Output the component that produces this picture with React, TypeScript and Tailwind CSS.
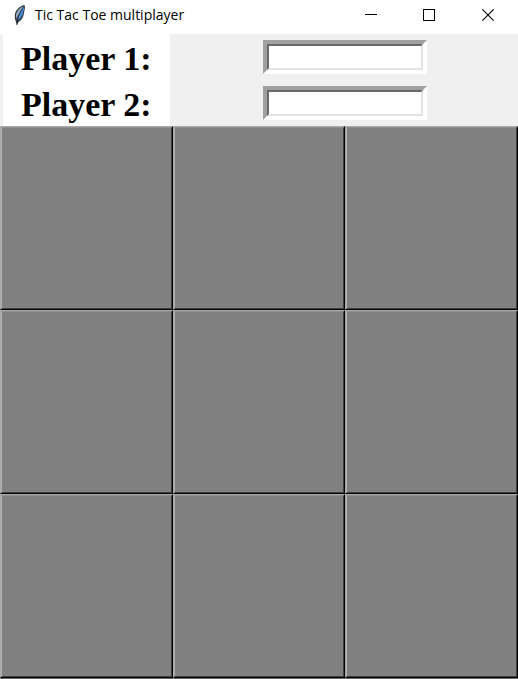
import { useState } from "react";

const players = [1, 2];
const cells = [0, 1, 2, 3, 4, 5, 6, 7, 8];

function Feather() {
  return (
    <svg width="15" height="22" viewBox="0 0 15 22" aria-hidden="true">
      <path d="M12.5 1C8.500 1.500 4.500 5 3 9.500C2.500 12 2.700 15 4 18L5 20L6.500 18C9.500 16.500 11.500 13 12 9C12.500 6 13.500 3 12.500 1Z" fill="#303a46" />
      <path d="M11.500 2C8 3.500 5 6.500 4 10.500L4 15C7 10 9 6 11.500 2Z" fill="#93a9c2" />
      <path d="M12 3C9 7 7 11 5.500 16.500C8.500 14.500 10.500 12 11 8.500C11.300 6.500 12.500 5 12 3Z" fill="#4a8ee0" />
      <path d="M9.500 6C7.500 9 6 13 5 20" fill="none" stroke="#222b36" strokeWidth="0.6" />
      <path d="M5 17V21" stroke="#222" strokeWidth="1" />
    </svg>
  );
}

function TitleBar() {
  return (
    <header className="flex h-[34px] items-start bg-white">
      <div className="flex h-[30px] grow items-center gap-2 pl-3">
        <Feather />
        <h1 className="font-['Open_Sans','Noto_Sans',sans-serif] text-sm text-black">Tic Tac Toe multiplayer</h1>
      </div>
      <div className="flex">
        <button type="button" aria-label="Minimize" className="flex h-[30px] w-[58px] items-center justify-center">
          <svg width="12" height="12" viewBox="0 0 12 12" shapeRendering="crispEdges">
            <path d="M0 5.500H12" stroke="#000" />
          </svg>
        </button>
        <button type="button" aria-label="Maximize" className="flex h-[30px] w-[58px] items-center justify-center">
          <svg width="12" height="12" viewBox="0 0 12 12" shapeRendering="crispEdges">
            <rect x="0.500" y="0.500" width="11" height="11" fill="none" stroke="#000" />
          </svg>
        </button>
        <button type="button" aria-label="Close" className="flex h-[30px] w-[60px] items-center justify-center">
          <svg width="12" height="12" viewBox="0 0 12 12">
            <path d="M0.300 0.300L11.700 11.700M11.700 0.300L0.300 11.700" stroke="#000" strokeWidth="1.100" />
          </svg>
        </button>
      </div>
    </header>
  );
}

function PlayerRow({ number }: { number: number }) {
  const id = `player-${number}`;
  return (
    <div className="grid h-[46px] grid-cols-3">
      <div className="flex px-[3px]">
        <label
          htmlFor={id}
          className="flex grow items-center justify-center bg-white pt-1 font-['Liberation_Serif','Times_New_Roman',serif] text-[34px] leading-[42px] font-bold whitespace-nowrap text-black"
        >
          Player {number}:
        </label>
      </div>
      <div className="col-span-2 flex items-center justify-center">
        <div className="flex h-[34px] w-[164px] border-4 border-t-[#a0a0a0] border-r-white border-b-white border-l-[#a0a0a0]">
          <input
            id={id}
            type="text"
            className="w-full min-w-0 rounded-none border-2 border-t-[#696969] border-r-[#e3e3e3] border-b-[#e3e3e3] border-l-[#696969] bg-white px-1 font-['Liberation_Sans',Arial,sans-serif] text-sm outline-none"
          />
        </div>
      </div>
    </div>
  );
}

export default function App() {
  const [marks, setMarks] = useState<string[]>(Array(9).fill(""));
  const play = (index: number) => {
    if (marks[index]) return;
    const turn = marks.filter(Boolean).length % 2 === 0 ? "X" : "O";
    setMarks(marks.map((mark, i) => (i === index ? turn : mark)));
  };
  return (
    <main className="flex min-h-screen flex-col bg-[#f0f0f0]">
      <TitleBar />
      <form>
        {players.map((number) => (
          <PlayerRow key={number} number={number} />
        ))}
      </form>
      <section aria-label="Board" className="grid grow grid-cols-3 grid-rows-3 border-b border-[#696969]">
        {cells.map((index) => (
          <button
            key={index}
            type="button"
            aria-label={`Cell ${index + 1}`}
            onClick={() => play(index)}
            className="flex border border-t-[#a8a8a8] border-r-black border-b-black border-l-[#a8a8a8] text-7xl font-bold"
          >
            <span className="flex h-full w-full items-center justify-center border border-t-[#909090] border-r-[#404040] border-b-[#404040] border-l-[#b4b4b4] bg-[#808080]">
              {marks[index]}
            </span>
          </button>
        ))}
      </section>
    </main>
  );
}
